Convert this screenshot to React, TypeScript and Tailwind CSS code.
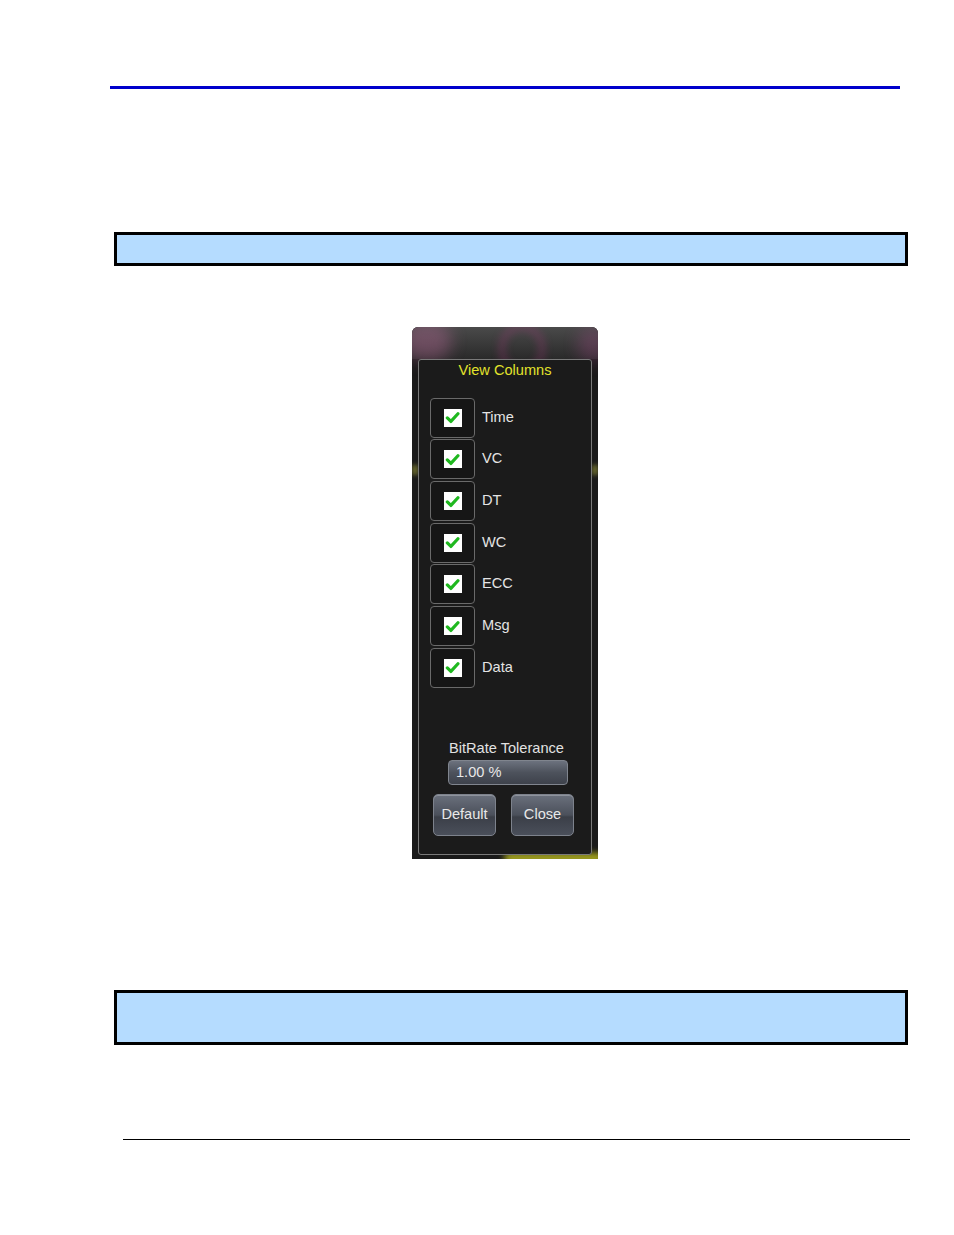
import type { ReactNode } from "react";

const columns = ["Time", "VC", "DT", "WC", "ECC", "Msg", "Data"];

function CheckRow({ label }: { label: string }) {
  return (
    <div className="flex h-[41.67px] items-center">
      <div className="flex h-[40px] w-[45px] items-center justify-center rounded-[4px] border border-[#6a6a6a] bg-[#161616]">
        <div className="flex h-[18px] w-[18px] items-center justify-center bg-white">
          <svg viewBox="0 0 16 16" className="h-[15px] w-[15px]">
            <path
              d="M2.5 8.5 L6.3 12.2 L13.8 4"
              fill="none"
              stroke="#1fb81f"
              strokeWidth="3.4"
              strokeLinecap="round"
              strokeLinejoin="round"
            />
          </svg>
        </div>
      </div>
      <span className="ml-[7px] text-[14.6px] text-[#e4e4e4]">{label}</span>
    </div>
  );
}

function GrayButton({ children }: { children: ReactNode }) {
  return (
    <button className="h-[42px] w-[63px] rounded-[5px] border border-[#7d828c] bg-[linear-gradient(#6a707c,#4b505b_50%,#3b3f48_55%,#4a4f5a)] text-[14.6px] text-[#e8e8e8] shadow-[inset_0_1px_0_#8e939c]">
      {children}
    </button>
  );
}

function ViewColumnsPanel() {
  return (
    <div className="relative h-[532px] w-[186px] overflow-hidden rounded-t-[6px] bg-[#1a1a1a]">
      {/* blurred scope trace behind the dialog */}
      <div className="absolute left-0 top-0 h-[32px] w-full bg-[linear-gradient(#4a4a4a,#2a2a2a)]" />
      <div className="absolute left-[-10px] top-[-6px] h-[40px] w-[50px] rounded-full bg-[#b86a98] opacity-40 blur-[8px]" />
      <div className="absolute left-[88px] top-[-2px] h-[48px] w-[44px] rounded-full border-[4px] border-[#a8387e] opacity-50 blur-[4px]" />
      <div className="absolute right-[-10px] top-[0px] h-[36px] w-[30px] rounded-full bg-[#a84c8c] opacity-30 blur-[8px]" />
      <div className="absolute bottom-[-4px] right-[-6px] h-[10px] w-[100px] rounded-full bg-[#c8c820] opacity-80 blur-[3px]" />
      <div className="absolute left-0 top-[138px] h-[10px] w-[6px] bg-[#b8b840] opacity-50 blur-[2px]" />
      <div className="absolute right-0 top-[138px] h-[10px] w-[6px] bg-[#b8b840] opacity-50 blur-[2px]" />

      <div className="absolute left-[6px] top-[32px] flex h-[496px] w-[174px] flex-col items-stretch rounded-[3px] border border-[#7a7a7a] bg-[#1b1b1b]">
        <div className="text-center text-[14.6px] text-[#e2e22c]">View Columns</div>
        <div className="mt-[15px] flex flex-col pl-[11px]">
          {columns.map((c) => (
            <CheckRow key={c} label={c} />
          ))}
        </div>
        <div className="mt-[50px] pl-[3px] text-center text-[14.6px] text-[#e2e2e2]">BitRate Tolerance</div>
        <div className="ml-[29px] flex h-[25px] w-[120px] items-center rounded-[4px] border border-[#80858e] bg-[linear-gradient(#6c727e,#4d525c_50%,#3e424b)] pl-[7px] text-[14.6px] text-[#e8e8e8]">
          1.00 %
        </div>
        <div className="ml-[14px] mt-[9px] flex gap-[15px]">
          <GrayButton>Default</GrayButton>
          <GrayButton>Close</GrayButton>
        </div>
      </div>
    </div>
  );
}

export default function App() {
  return (
    <div className="min-h-[1235px] w-[954px] bg-white pt-[86px] font-['Liberation_Sans',Arial,sans-serif]">
      <div className="ml-[110px] h-[3px] w-[790px] bg-[#0000cc]" />
      <div className="ml-[114px] mt-[143px] h-[34px] w-[794px] border-[3px] border-black bg-[#b5dcff]" />
      <div className="ml-[412px] mt-[61px]">
        <ViewColumnsPanel />
      </div>
      <div className="ml-[114px] mt-[131px] h-[55px] w-[794px] border-[3px] border-black bg-[#b5dcff]" />
      <div className="ml-[123px] mt-[94px] h-px w-[787px] bg-black" />
    </div>
  );
}
